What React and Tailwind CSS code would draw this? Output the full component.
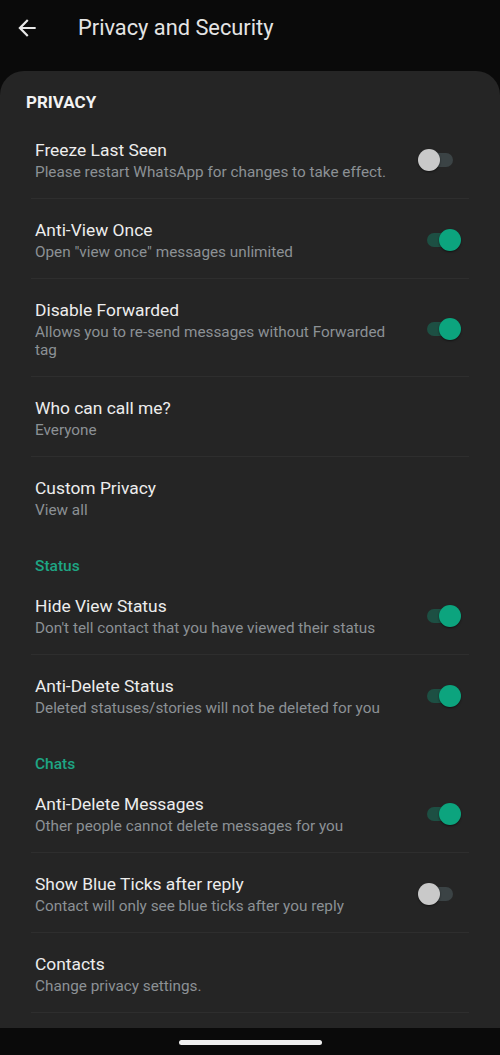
import React from 'react';

// Settings screen: Privacy and Security (dark theme)
const sections = [
  {
    title: 'PRIVACY',
    kind: 'main',
    items: [
      { title: 'Freeze Last Seen', sub: 'Please restart WhatsApp for changes to take effect.', toggle: false },
      { title: 'Anti-View Once', sub: 'Open "view once" messages unlimited', toggle: true },
      { title: 'Disable Forwarded', sub: 'Allows you to re-send messages without Forwarded tag', toggle: true },
      { title: 'Who can call me?', sub: 'Everyone' },
      { title: 'Custom Privacy', sub: 'View all' },
    ],
  },
  {
    title: 'Status',
    items: [
      { title: 'Hide View Status', sub: "Don't tell contact that you have viewed their status", toggle: true },
      { title: 'Anti-Delete Status', sub: 'Deleted statuses/stories will not be deleted for you', toggle: true },
    ],
  },
  {
    title: 'Chats',
    lastDivider: true,
    items: [
      { title: 'Anti-Delete Messages', sub: 'Other people cannot delete messages for you', toggle: true },
      { title: 'Show Blue Ticks after reply', sub: 'Contact will only see blue ticks after you reply', toggle: false },
      { title: 'Contacts', sub: 'Change privacy settings.' },
    ],
  },
];

function Switch({ on }) {
  return (
    <div className="relative w-[43px] h-[22px] shrink-0">
      <div
        className={`absolute left-[9px] w-[26px] top-[4px] h-[14px] rounded-full ${
          on ? 'bg-[#1d4f43]' : 'bg-[#3b4345]'
        }`}
      />
      <div
        className={`absolute top-0 w-[22px] h-[22px] rounded-full shadow-[0_1px_2px_rgba(0,0,0,0.5)] ${
          on ? 'left-[21px] bg-[#0ca47e]' : 'left-0 bg-[#c9c9c9]'
        }`}
      />
    </div>
  );
}

function Row({ item, divider }) {
  return (
    <div className="px-[31px]">
      <div className={`flex items-center border-b ${divider ? 'border-[#2e2e2e]' : 'border-transparent'}`}>
        <div className="flex-1 pl-[4px] pt-[20px] pb-[17px] pr-4">
          <div className="text-[17.4px] leading-[22px] text-[#ededed]">{item.title}</div>
          <div className="mt-[2px] text-[15.3px] leading-[18px] text-[#8c9195] max-w-[360px]">{item.sub}</div>
        </div>
        {item.toggle !== undefined && (
          <div className="mr-[8px] pt-[2px]">
            <Switch on={item.toggle} />
          </div>
        )}
      </div>
    </div>
  );
}

export default function App() {
  return (
    <div
      className="w-[500px] h-[1055px] bg-[#0a0a0a] flex flex-col overflow-hidden"
      style={{ fontFamily: 'Roboto, "Noto Sans", sans-serif' }}
    >
      {/* Top bar */}
      <div className="h-[71px] shrink-0 flex items-start pt-[15px]">
        <svg width="26" height="26" viewBox="0 0 24 24" className="ml-[14px] fill-[#e8e8e8]">
          <path d="M20 11H7.83l5.59-5.59L12 4l-8 8 8 8 1.41-1.41L7.83 13H20v-2z" />
        </svg>
        <div className="ml-[38px] text-[21.8px] leading-[26px] text-[#e4e4e4]">Privacy and Security</div>
      </div>

      {/* Card */}
      <div className="flex-1 bg-[#252525] rounded-t-[24px] overflow-hidden">
        {sections.map((s, si) => (
          <div key={si}>
            {s.kind === 'main' ? (
              <div className="pl-[26px] pt-[21px] pb-[7px] text-[17px] leading-[20px] font-bold text-[#f2f2f2]">
                {s.title}
              </div>
            ) : (
              <div className="pl-[35px] pt-[21px] text-[15.5px] leading-[17px] font-medium text-[#1ea584]">
                {s.title}
              </div>
            )}
            {s.items.map((it, i) => (
              <Row key={i} item={it} divider={i < s.items.length - 1 || s.lastDivider} />
            ))}
          </div>
        ))}
      </div>

      {/* Gesture nav bar */}
      <div className="h-[27px] shrink-0 bg-[#0a0a0a] flex justify-center pt-[12px]">
        <div className="w-[143px] h-[5px] rounded-full bg-[#efefef]" />
      </div>
    </div>
  );
}
